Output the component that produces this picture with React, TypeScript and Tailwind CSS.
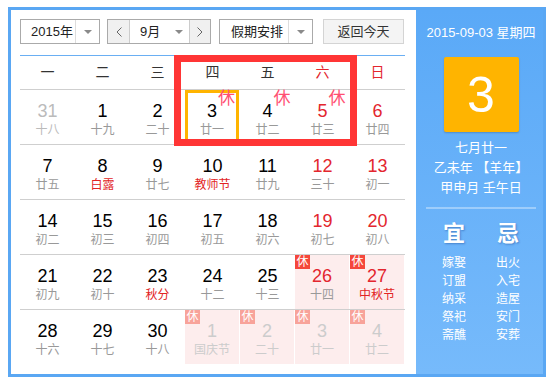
import clsx from "clsx"

type Day = {
  n: number
  lunar: string
  other?: boolean // 非本月
  red?: boolean // 周末红字
  fest?: boolean // 节日节气
  rest?: boolean // 法定假日
  today?: boolean
  mark?: boolean // 手写的“休”
}

const weeks: Day[][] = [
  [
    { n: 31, lunar: "十八", other: true },
    { n: 1, lunar: "十九" },
    { n: 2, lunar: "二十" },
    { n: 3, lunar: "廿一", today: true, mark: true },
    { n: 4, lunar: "廿二", mark: true },
    { n: 5, lunar: "廿三", red: true, mark: true },
    { n: 6, lunar: "廿四", red: true },
  ],
  [
    { n: 7, lunar: "廿五" },
    { n: 8, lunar: "白露", fest: true },
    { n: 9, lunar: "廿七" },
    { n: 10, lunar: "教师节", fest: true },
    { n: 11, lunar: "廿九" },
    { n: 12, lunar: "三十", red: true },
    { n: 13, lunar: "初一", red: true },
  ],
  [
    { n: 14, lunar: "初二" },
    { n: 15, lunar: "初三" },
    { n: 16, lunar: "初四" },
    { n: 17, lunar: "初五" },
    { n: 18, lunar: "初六" },
    { n: 19, lunar: "初七", red: true },
    { n: 20, lunar: "初八", red: true },
  ],
  [
    { n: 21, lunar: "初九" },
    { n: 22, lunar: "初十" },
    { n: 23, lunar: "秋分", fest: true },
    { n: 24, lunar: "十二" },
    { n: 25, lunar: "十三" },
    { n: 26, lunar: "十四", red: true, rest: true },
    { n: 27, lunar: "中秋节", red: true, fest: true, rest: true },
  ],
  [
    { n: 28, lunar: "十六" },
    { n: 29, lunar: "十七" },
    { n: 30, lunar: "十八" },
    { n: 1, lunar: "国庆节", other: true, rest: true },
    { n: 2, lunar: "二十", other: true, rest: true },
    { n: 3, lunar: "廿一", other: true, rest: true },
    { n: 4, lunar: "廿二", other: true, rest: true },
  ],
]

const weekNames = ["一", "二", "三", "四", "五", "六", "日"]
const yi = ["嫁娶", "订盟", "纳采", "祭祀", "斋醮"]
const ji = ["出火", "入宅", "造屋", "安门", "安葬"]

function Tri() {
  return <span className="block h-0 w-0 border-x-[4px] border-t-[4px] border-x-transparent border-t-[#8a8a8a]" />
}

function Chevron({ dir }: { dir: "l" | "r" }) {
  return (
    <svg width="6" height="10" viewBox="0 0 6 10">
      <polyline
        points={dir === "l" ? "5.5,0.5 1,5 5.5,9.5" : "0.5,0.5 5,5 0.5,9.5"}
        fill="none"
        stroke="#666"
        strokeWidth="1"
      />
    </svg>
  )
}

function Cell({ d }: { d: Day }) {
  const numColor = d.other
    ? d.rest
      ? "text-[#cccccc]"
      : "text-[#bbbbbb]"
    : d.red
      ? "text-[#e3262e]"
      : "text-black"
  const lunarColor = d.other
    ? d.rest
      ? "text-[#cccccc]"
      : "text-[#bbbbbb]"
    : d.fest
      ? "text-[#e22424]"
      : "text-[#999999]"

  return (
    <div
      className={clsx(
        "relative flex flex-col items-center pt-[11px]",
        d.rest && "mr-px bg-[#fdeded]",
        d.today && "mr-px shadow-[inset_0_0_0_3px_#ffb400]"
      )}
    >
      {d.rest && (
        <span
          className={clsx(
            "absolute left-0 top-0 h-[14px] w-[15px] text-center text-[12px] leading-[14px] text-white",
            d.other ? "bg-[#f8a39a]" : "bg-[#f5473b]"
          )}
        >
          休
        </span>
      )}
      <span className={clsx("relative text-[18px] leading-[20px]", numColor)}>
        {d.n}
        {d.mark && (
          <span className="absolute left-full top-[-11px] ml-[1px] text-[17px] leading-[17px] text-[#ff4f72]">
            休
          </span>
        )}
      </span>
      <span className={clsx("mt-[1px] whitespace-nowrap text-[12px] leading-[16px]", lunarColor)}>{d.lunar}</span>
    </div>
  )
}

export default function App() {
  return (
    <div className="h-[382px] w-[553px] bg-white pl-[8px] pt-[7px] font-['Liberation_Sans','Noto_Sans_CJK_SC',sans-serif]">
      <div className="flex h-[370px] w-[538px] border-[3px] border-[#5aa7f3]">
        {/* 左侧日历 */}
        <div className="relative w-[405px] bg-white pl-[9px] pt-[9px]">
          {/* 工具栏 */}
          <div className="flex h-[25px] text-[13px] text-[#222]">
            <div className="flex w-[80px] border border-[#aaaaaa] bg-white">
              <div className="flex flex-1 items-center pl-[10px]">2015年</div>
              <div className="flex w-[24px] items-center justify-center border-l border-[#dddddd]">
                <Tri />
              </div>
            </div>

            <div className="ml-[7px] flex w-[104px] border border-[#aaaaaa] bg-white">
              <div className="flex w-[22px] items-center justify-center border-r border-[#cccccc] bg-[#f0f0f0]">
                <Chevron dir="l" />
              </div>
              <div className="flex flex-1 items-center pl-[10px]">9月</div>
              <div className="flex w-[20px] items-center justify-center">
                <Tri />
              </div>
              <div className="flex w-[21px] items-center justify-center border-l border-[#cccccc] bg-[#f0f0f0]">
                <Chevron dir="r" />
              </div>
            </div>

            <div className="ml-[8px] flex w-[94px] border border-[#aaaaaa] bg-white">
              <div className="flex flex-1 items-center pl-[11px]">假期安排</div>
              <div className="flex w-[24px] items-center justify-center border-l border-[#dddddd]">
                <Tri />
              </div>
            </div>

            <div className="ml-[10px] flex w-[81px] items-center justify-center border border-[#d4d4d4] bg-[#f4f4f4] text-[#333]">
              返回今天
            </div>
          </div>

          {/* 星期 */}
          <div className="mt-[11px] grid h-[35px] w-[385px] grid-cols-7 border-y border-t-[#6aaff3] border-b-[#cfcfcf] text-[14px]">
            {weekNames.map((w, i) => (
              <div
                key={w}
                className={clsx("flex items-center justify-center", i >= 5 ? "text-[#e3262e]" : "text-[#333]")}
              >
                {w}
              </div>
            ))}
          </div>

          {/* 日期 */}
          {weeks.map((row, r) => (
            <div
              key={r}
              className={clsx(
                "grid w-[385px] grid-cols-7",
                r < weeks.length - 1 ? "h-[55px] border-b border-[#cfcfcf]" : "h-[54px]"
              )}
            >
              {row.map((d, i) => (
                <Cell key={i} d={d} />
              ))}
            </div>
          ))}

          {/* 标注框 */}
          <div className="pointer-events-none absolute left-[163px] top-[45px] h-[91px] w-[183px] border-[7px] border-[#ff3535]" />
        </div>

        {/* 右侧面板 */}
        <div className="flex w-[127px] flex-col items-center bg-gradient-to-b from-[#5aa9f7] to-[#76bafb] pl-[3px] pt-[15px] text-white">
          <div className="text-[13px] leading-[16px]">2015-09-03 星期四</div>
          <div className="mt-[16px] flex h-[75px] w-[75px] items-center justify-center rounded-[2px] bg-[#ffb400] text-[50px] leading-none shadow-[0_1px_2px_rgba(0,0,0,0.2)]">
            3
          </div>
          <div className="mt-[6px] text-center text-[13px] leading-[20px]">
            <div>七月廿一</div>
            <div>乙未年 【羊年】</div>
            <div>甲申月 壬午日</div>
          </div>
          <div className="mt-[9px] h-[2px] w-[110px] bg-white/35" />
          <div className="mt-[13px] flex gap-[4px]">
            {[
              { t: "宜", list: yi },
              { t: "忌", list: ji },
            ].map((c) => (
              <div key={c.t} className="flex w-[50px] flex-col items-center">
                <div className="text-[22px] font-bold leading-[24px] [text-shadow:1px_1px_2px_rgba(0,40,120,0.35)]">
                  {c.t}
                </div>
                <div className="mt-[8px] flex flex-col items-center text-[12px] leading-[18px]">
                  {c.list.map((s) => (
                    <span key={s}>{s}</span>
                  ))}
                </div>
              </div>
            ))}
          </div>
        </div>
      </div>
    </div>
  )
}
